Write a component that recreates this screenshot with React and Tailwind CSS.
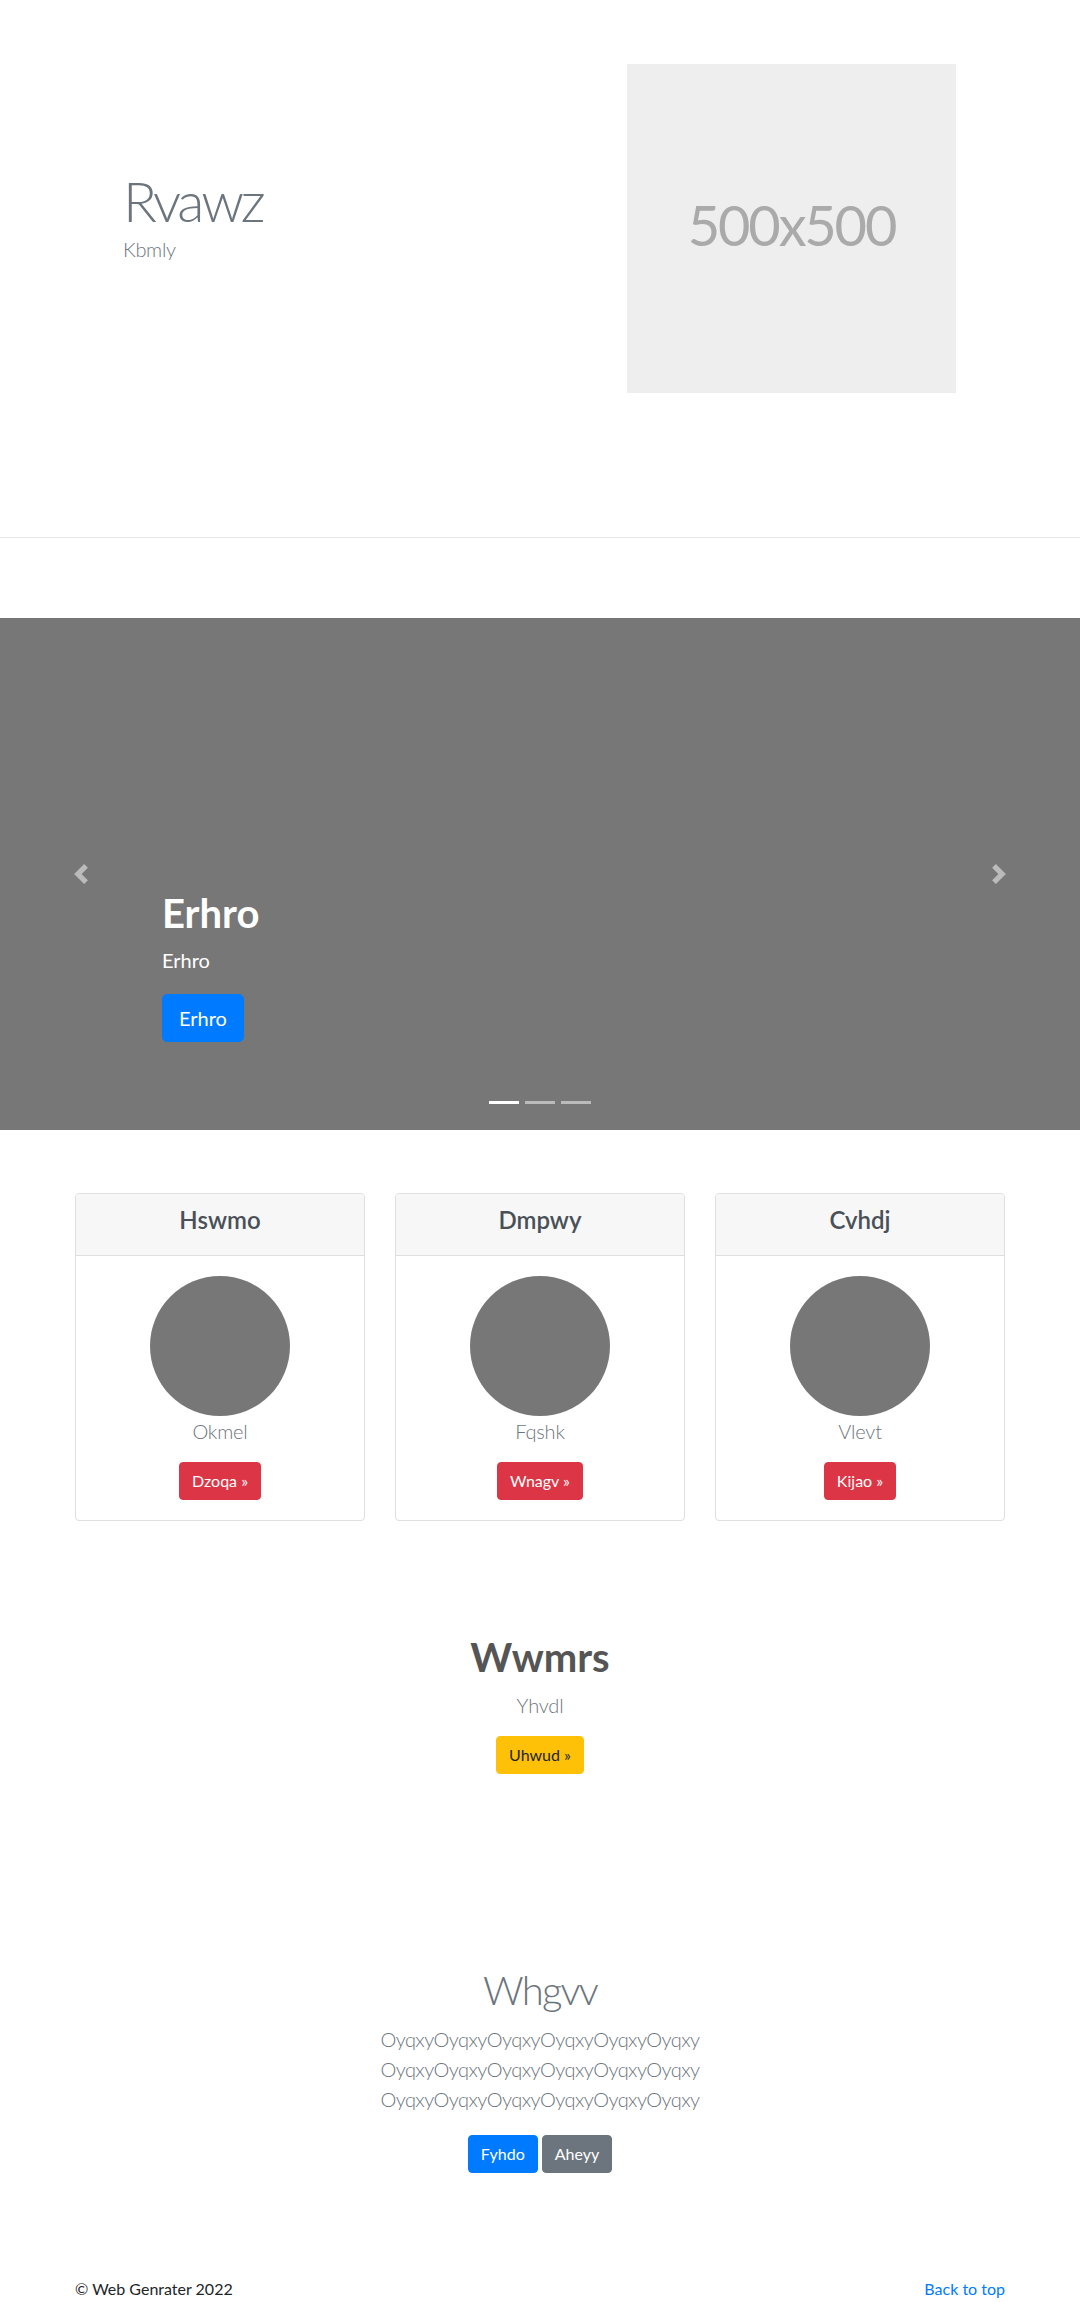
const cards = [
  { title: "Hswmo", name: "Okmel", btn: "Dzoqa »" },
  { title: "Dmpwy", name: "Fqshk", btn: "Wnagv »" },
  { title: "Cvhdj", name: "Vlevt", btn: "Kijao »" },
];

function Chevron({ dir }) {
  return (
    <svg viewBox="0 0 8 8" className="w-5 h-5 opacity-50" fill="#fff">
      {dir === "left" ? (
        <path d="M5.25 0l-4 4 4 4 1.5-1.5L4.25 4l2.5-2.5L5.25 0z" />
      ) : (
        <path d="M2.75 0l-1.5 1.5L3.75 4l-2.5 2.5L2.75 8l4-4-4-4z" />
      )}
    </svg>
  );
}

export default function App() {
  return (
    <div className="w-[1080px] bg-white font-['Lato',sans-serif] text-[#212529]">
      {/* Hero */}
      <div className="flex items-center pt-[64px]">
        <div className="w-[627px] pl-[123px] pb-[10px]">
          <h1 className="text-[56px] leading-[1.2] font-light tracking-[-3.2px] text-[#6c757d]">Rvawz</h1>
          <p className="text-[20px] leading-[1.5] font-light tracking-[-0.3px] text-[#6c757d] mb-4">Kbmly</p>
        </div>
        <div className="w-[329px] h-[329px] bg-[#eeeeee] flex items-center justify-center pb-[8px]">
          <span className="text-[56px] leading-none tracking-[-2.2px] text-[#aaaaaa]">500x500</span>
        </div>
      </div>
      <hr className="mt-[144px] border-0 border-t border-[#e6e6e6]" />

      {/* Carousel */}
      <div className="relative mt-[80px] h-[512px] bg-[#777777]">
        <div className="absolute left-[162px] bottom-[88px] text-white">
          <h2 className="text-[40px] font-bold leading-[1.2] mb-2">Erhro</h2>
          <p className="text-[20px] leading-[1.5] mb-[19px]">Erhro</p>
          <a className="inline-block bg-[#007bff] border border-[#007bff] rounded-[5px] px-4 py-2 text-[20px] leading-[1.5] text-white">
            Erhro
          </a>
        </div>
        <div className="absolute left-[71px] top-[246px]">
          <Chevron dir="left" />
        </div>
        <div className="absolute left-[989px] top-[246px]">
          <Chevron dir="right" />
        </div>
        <div className="absolute bottom-[26px] left-0 right-0 flex justify-center gap-[6px]">
          <span className="block w-[30px] h-[3px] bg-white" />
          <span className="block w-[30px] h-[3px] bg-white/50" />
          <span className="block w-[30px] h-[3px] bg-white/50" />
        </div>
      </div>

      {/* Cards */}
      <div className="mt-[63px] px-[75px] grid grid-cols-3 gap-[30px]">
        {cards.map((c) => (
          <div key={c.title} className="border border-[#dfdfdf] rounded-[4px] overflow-hidden">
            <div className="bg-[#f7f7f7] border-b border-[#dfdfdf] px-5 py-3 text-center">
              <h4 className="text-[24px] leading-[1.2] font-semibold mb-2 text-[#495057]">{c.title}</h4>
            </div>
            <div className="p-5 flex flex-col items-center">
              <div className="w-[140px] h-[140px] rounded-full bg-[#777777]" />
              <p className="text-[20px] leading-[1.5] font-light tracking-[-0.2px] text-[#6c757d] mb-4">{c.name}</p>
              <a className="inline-block bg-[#dc3545] border border-[#dc3545] rounded-[4px] px-3 py-[6px] text-[16px] leading-[1.5] text-white">
                {c.btn}
              </a>
            </div>
          </div>
        ))}
      </div>

      {/* Wwmrs */}
      <div className="mt-[112px] text-center">
        <h2 className="text-[40px] font-bold leading-[1.2] mb-[9px] text-[#555555]">Wwmrs</h2>
        <p className="text-[20px] leading-[1.5] font-light tracking-[-0.2px] text-[#6c757d] mb-4">Yhvdl</p>
        <a className="inline-block bg-[#ffc107] border border-[#ffc107] rounded-[4px] px-3 py-[6px] text-[16px] leading-[1.5] text-[#212529]">
          Uhwud »
        </a>
      </div>

      {/* Whgvv */}
      <div className="mt-[192px] text-center">
        <h2 className="text-[40px] font-light leading-[1.2] tracking-[-1.8px] mb-[10px] text-[#6c757d]">Whgvv</h2>
        <p className="text-[20px] leading-[1.5] font-light tracking-[-0.55px] text-[#6c757d] mb-[21px] whitespace-nowrap">
          OyqxyOyqxyOyqxyOyqxyOyqxyOyqxy
          <br />
          OyqxyOyqxyOyqxyOyqxyOyqxyOyqxy
          <br />
          OyqxyOyqxyOyqxyOyqxyOyqxyOyqxy
        </p>
        <div className="flex justify-center gap-1">
          <a className="inline-block bg-[#007bff] border border-[#007bff] rounded-[4px] px-3 py-[6px] text-[16px] leading-[1.5] text-white">
            Fyhdo
          </a>
          <a className="inline-block bg-[#6c757d] border border-[#6c757d] rounded-[4px] px-3 py-[6px] text-[16px] leading-[1.5] text-white">
            Aheyy
          </a>
        </div>
      </div>

      {/* Footer */}
      <div className="mt-[104px] px-[75px] pb-12 flex justify-between text-[16px] leading-[1.5]">
        <p className="text-[#212529]">© Web Genrater 2022</p>
        <a className="text-[#007bff]">Back to top</a>
      </div>
    </div>
  );
}
